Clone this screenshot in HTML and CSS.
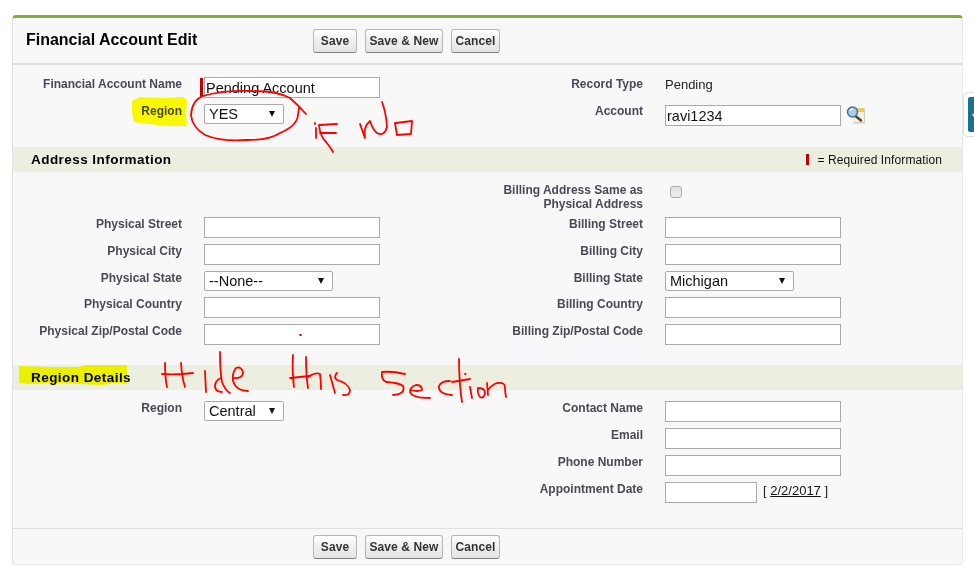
FILE: index.html
```html
<!DOCTYPE html>
<html lang="en">
<head>
<meta charset="utf-8">
<title>Financial Account Edit</title>
<link rel="stylesheet" href="styles.css">
</head>
<body>
<div class="page">
  <main class="panel">
    <header class="bar bar-top">
      <h2 class="title">Financial Account Edit</h2>
      <div class="buttons">
        <button class="btn">Save</button>
        <button class="btn">Save &amp; New</button>
        <button class="btn">Cancel</button>
      </div>
    </header>

    <section class="grid grid-info">
      <label class="lbl">Financial Account Name</label>
      <div class="field"><span class="required"></span><input class="txt" value="Pending Account"></div>
      <label class="lbl">Record Type</label>
      <div class="field static">Pending</div>

      <label class="lbl">Region</label>
      <div class="field"><span class="sel sel-short"><select><option>YES</option></select></span></div>
      <label class="lbl">Account</label>
      <div class="field field-lookup">
        <input class="txt" value="ravi1234">
        <svg class="lookup" width="20" height="19" viewBox="0 0 20 19">
          <rect x="7" y="3.5" width="12" height="15" fill="#cfcfc8"/>
          <rect x="7" y="3" width="11" height="14" fill="#f3efe0"/>
          <rect x="9" y="3" width="9" height="4" fill="#f2c862"/>
          <path d="M9.5 11 L15 15.5" stroke="#5c4420" stroke-width="2.4" stroke-linecap="round"/>
          <circle cx="6.5" cy="7" r="5" fill="#a9cbe6" stroke="#3f6f97" stroke-width="1.4"/>
          <path d="M4 6 A3 3 0 0 1 7 3.8" fill="none" stroke="#eef6fc" stroke-width="1.2"/>
        </svg>
      </div>
    </section>

    <div class="section-head">
      <h3 class="section-title">Address Information</h3>
      <span class="legend"><span class="legend-mark"></span>= Required Information</span>
    </div>

    <section class="grid grid-address">
      <span></span><span></span>
      <label class="lbl">Billing Address Same as Physical Address</label>
      <div class="field"><input class="check" type="checkbox"></div>

      <label class="lbl">Physical Street</label>
      <div class="field"><input class="txt"></div>
      <label class="lbl">Billing Street</label>
      <div class="field"><input class="txt"></div>

      <label class="lbl">Physical City</label>
      <div class="field"><input class="txt"></div>
      <label class="lbl">Billing City</label>
      <div class="field"><input class="txt"></div>

      <label class="lbl">Physical State</label>
      <div class="field"><span class="sel sel-wide"><select><option>--None--</option></select></span></div>
      <label class="lbl">Billing State</label>
      <div class="field"><span class="sel sel-wide"><select><option>Michigan</option></select></span></div>

      <label class="lbl">Physical Country</label>
      <div class="field"><input class="txt"></div>
      <label class="lbl">Billing Country</label>
      <div class="field"><input class="txt"></div>

      <label class="lbl">Physical Zip/Postal Code</label>
      <div class="field"><input class="txt"></div>
      <label class="lbl">Billing Zip/Postal Code</label>
      <div class="field"><input class="txt"></div>
    </section>

    <div class="section-head">
      <h3 class="section-title">Region Details</h3>
    </div>

    <section class="grid grid-region">
      <label class="lbl">Region</label>
      <div class="field"><span class="sel sel-short"><select><option>Central</option></select></span></div>
      <label class="lbl">Contact Name</label>
      <div class="field"><input class="txt"></div>

      <span></span><span></span>
      <label class="lbl">Email</label>
      <div class="field"><input class="txt"></div>

      <span></span><span></span>
      <label class="lbl">Phone Number</label>
      <div class="field"><input class="txt"></div>

      <span></span><span></span>
      <label class="lbl">Appointment Date</label>
      <div class="field field-date"><input class="txt txt-date"><span class="date-link">[ <a href="#">2/2/2017</a> ]</span></div>
    </section>

    <footer class="bar bar-bottom">
      <div class="buttons">
        <button class="btn">Save</button>
        <button class="btn">Save &amp; New</button>
        <button class="btn">Cancel</button>
      </div>
    </footer>
  </main>

  <div class="side-tab"><span class="side-arrow"></span></div>

  <svg class="ink ink-marker" width="974" height="565" viewBox="0 0 974 565">
    <path d="M132 101 L140 97 L165 98 L183 97 L187 100 L186 115 L187 126 L165 126 L150 124 L134 122 L132 112 Z" fill="#ffff00"/>
    <path d="M19 366 L50 367 L78 367 L85 365 L127 365 L127 384 L115 383 L102 385 L60 383 L29 384 L19 383 Z" fill="#ffff00"/>
  </svg>

  <svg class="ink ink-pen" width="974" height="565" viewBox="0 0 974 565" fill="none" stroke="#ff0000" stroke-width="1.8" stroke-linejoin="round" stroke-linecap="round">
    <path d="M306 114 Q298 105 290 98 Q277 91 253 91 Q223 90 203 96 Q192 100 191 115 Q192 127 205 135 Q222 142 247 140 Q270 140 280 133 Q297 126 298 115 L299 108"/>
    <path d="M315 123 V124 M316 128 L316 138"/>
    <path d="M337 124 L319 125 Q320 136 326 142 Q331 148 333 152 M320 133 L336 133"/>
    <path d="M360 124 L365 138 Q363 127 370 121 Q373 130 377 133 Q384 137 387 127 Q386 112 382 102"/>
    <path d="M396 123 L412 121 L411 134 L397 135 L395 123"/>
    <path d="M300 335 L301 335"/>
    <path d="M165 363 Q165 378 167 387 M181 363 Q182 378 185 387 M162 374 Q178 375 193 373"/>
    <path d="M205 371 L206 392"/>
    <path d="M220 352 Q220 372 222 382 Q225 390 230 393 M221 378 Q215 380 215 387 Q216 392 222 392"/>
    <path d="M233 378 Q243 379 243 372 Q241 366 236 368 Q232 373 233 381 Q236 391 248 391"/>
    <path d="M293 355 Q292 372 294 387 M290 378 Q300 377 310 376"/>
    <path d="M306 357 Q306 375 308 388 M308 377 Q316 372 320 374 Q321 382 321 389"/>
    <path d="M330 375 L335 393"/>
    <path d="M337 373 Q333 377 337 380 Q348 383 350 390 Q350 396 343 395"/>
    <path d="M405 374 Q392 371 382 372 Q381 380 386 382 Q400 383 403 386 Q406 394 393 395"/>
    <path d="M410 390 Q418 392 422 390 Q422 385 416 385 Q410 387 410 392 Q412 398 430 398"/>
    <path d="M450 381 Q441 381 439 386 Q438 394 452 395"/>
    <path d="M459 359 Q459 382 462 402 M452 382 L470 379"/>
    <path d="M470 387 L472 398 M465 374 L465.5 374"/>
    <path d="M478 388 Q485 388 485 393 Q484 399 480 397 Q477 393 478 388"/>
    <path d="M487 383 L488 395 M488 390 Q493 384 497 383 Q505 382 505 387 Q505 392 506 397"/>
  </svg>
</div>
</body>
</html>
```

FILE: styles.css
```css
* { box-sizing: border-box; }
html, body { margin: 0; padding: 0; height: 565px; overflow: hidden; background: #fff; }
body { font-family: "Liberation Sans", Arial, sans-serif; color: #000; }

.page { position: relative; width: 974px; height: 565px; padding: 15px 11px 0 12px; }

.panel {
  height: 550px;
  background: #f8f8f8;
  border-top: 3px solid #86ab3c;
  border-left: 1px solid #e2e2e2;
  border-right: 1px solid #e8e8e8;
  border-bottom: 1px solid #e8e8e8;
  border-radius: 4px 4px 4px 4px;
}

.bar { display: flex; align-items: flex-start; }
.bar-top { height: 47px; padding: 11px 0 0 13px; border-bottom: 2px solid #dfdfdf; }
.bar-bottom { height: 35px; padding: 6px 0 0 300px; border-top: 1px solid #dfdfdf; }
.title { width: 287px; margin: 0; font-size: 16px; line-height: 22px; font-weight: bold; letter-spacing: -0.03px; color: #000; }

.buttons { display: flex; gap: 8px; }
.btn {
  height: 24px;
  padding: 0;
  border: 1px solid #b5b5b5;
  border-bottom-color: #7f7f7f;
  border-radius: 3px;
  background: linear-gradient(#ffffff, #efefef 50%, #e4e4e4);
  font: bold 12px "Liberation Sans", Arial, sans-serif;
  letter-spacing: 0.1px;
  white-space: nowrap;
  color: #333;
}
.btn:nth-child(1) { width: 44px; }
.btn:nth-child(2) { width: 78px; }
.btn:nth-child(3) { width: 49px; }

.grid { display: grid; grid-template-columns: 191px 296px 165px 1fr; grid-auto-rows: 27px; }
.grid-info { padding: 12px 0 16px; }
.grid-address { padding: 11px 0 14px; grid-template-rows: 34px 27px 27px 26px 27px 27px; }
.grid-region { padding: 11px 0 19px; }

.lbl {
  padding-right: 22px;
  text-align: right;
  font-size: 12px;
  line-height: 14px;
  font-weight: bold;
  color: #4a4a56;
}

.field { position: relative; display: flex; align-items: flex-start; font-size: 14px; }
.static { font-size: 13px; line-height: 16px; color: #222; }
.field-lookup { padding-top: 1px; }
.field-date { gap: 6px; }

.txt {
  width: 176px;
  height: 21px;
  padding: 0 1px;
  border: 1px solid #a9a9a9;
  border-radius: 0;
  background: #fff;
  font: 14.5px "Liberation Sans", Arial, sans-serif;
  color: #111;
}
.txt-date { width: 92px; }
.required { position: absolute; left: -4px; top: 1px; width: 3px; height: 19px; background: #c00000; }
.lookup { margin: 0 0 0 5px; }

.sel { position: relative; display: block; height: 20px; }
.sel-short { width: 80px; }
.sel-wide { width: 129px; }
.sel::after {
  content: "";
  position: absolute;
  right: 9px;
  top: 7px;
  border-left: 3.5px solid transparent;
  border-right: 3.5px solid transparent;
  border-top: 6px solid #111;
}
.sel select {
  appearance: none;
  width: 100%;
  height: 20px;
  padding: 0 0 0 4px;
  border: 1px solid #a9a9a9;
  border-radius: 2px;
  background: #fff;
  font: 14.5px "Liberation Sans", Arial, sans-serif;
  color: #111;
}

.check {
  appearance: none;
  width: 12px;
  height: 12px;
  margin: 3px 0 0 5px;
  border: 1px solid #a8a8a8;
  border-radius: 3px;
  background: linear-gradient(#e2e2e2, #efefef);
}

.date-link { font-size: 13px; line-height: 18px; color: #222; }
.date-link a { color: #111; }

.section-head {
  display: flex;
  align-items: center;
  justify-content: space-between;
  height: 25px;
  padding: 0 20px 0 18px;
  background: #ecefdf;
}
.section-title { margin: 0; font-size: 13.5px; font-weight: bold; letter-spacing: 0.45px; color: #000; }
.legend { display: flex; align-items: center; font-size: 12px; color: #111; letter-spacing: 0.1px; }
.legend-mark { width: 3px; height: 11px; margin-right: 8px; background: #c00000; }

.side-tab {
  position: absolute;
  left: 963px;
  top: 92px;
  width: 11px;
  height: 45px;
  padding: 4px 0 4px 4px;
  background: #fff;
  border: 1px solid #dcdcdc;
  border-right: 0;
  border-radius: 5px 0 0 5px;
}
.side-tab::before { content: ""; display: block; width: 100%; height: 100%; background: #1c6f8e; border-radius: 2px 0 0 2px; }
.side-arrow {
  position: absolute;
  left: 8px;
  top: 19px;
  border-top: 3px solid transparent;
  border-bottom: 3px solid transparent;
  border-right: 3px solid #d6e6ec;
}

.ink { position: absolute; left: 0; top: 0; pointer-events: none; }
.ink-marker { mix-blend-mode: multiply; }
```
